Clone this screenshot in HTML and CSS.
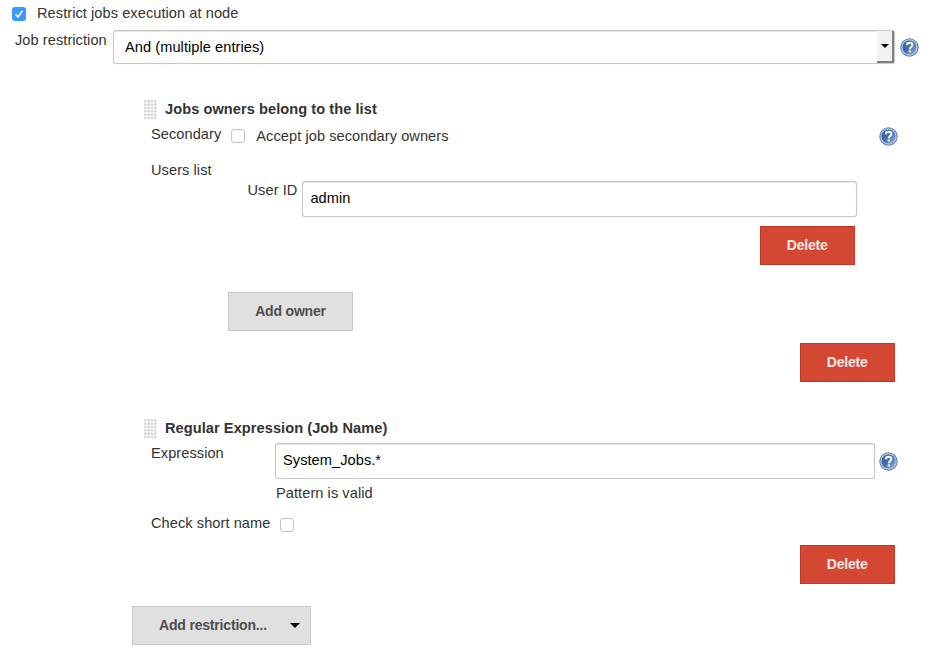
FILE: index.html
```
<!DOCTYPE html>
<html lang="en">
<head>
<meta charset="utf-8">
<title>Job restrictions</title>
<link rel="stylesheet" href="styles.css">
</head>
<body>
<svg class="defs" aria-hidden="true">
  <defs>
    <linearGradient id="ball" x1="0" y1="0" x2="1" y2="1"><stop offset="0" stop-color="#2c5392"/><stop offset=".5" stop-color="#4870b0"/><stop offset="1" stop-color="#9fb9e0"/></linearGradient>
    <symbol id="help" viewBox="0 0 19 19">
      <circle cx="9.5" cy="9.5" r="9.2" fill="#5b7fb6"/>
      <circle cx="9.5" cy="9.5" r="7.6" fill="url(#ball)" stroke="#b9cae4" stroke-width="1.2"/>
      <path d="M6.8 7.2C6.9 5.4 8 4.7 9.6 4.7c1.700 0 2.800.900 2.800 2.300 0 1.900-2.600 2-2.600 4.200" fill="none" stroke="#fff" stroke-width="2"/>
      <rect x="8.700" y="12.400" width="2.200" height="2.100" fill="#fff"/>
    </symbol>
    <pattern id="dots" width="3.333" height="3.333" patternUnits="userSpaceOnUse"><rect x=".3" y=".3" width="2" height="2" fill="#c4c4bc"/></pattern>
    <symbol id="grip" viewBox="0 0 14 20"><rect width="13" height="20" fill="url(#dots)"/></symbol>
  </defs>
</svg>
<main class="form">
  <div class="row row-enable">
    <span class="check checked"><svg viewBox="0 0 14 14"><path d="M3.500 7.300 6 10l4.600-6.400" fill="none" stroke="#fff" stroke-width="1.600"/></svg></span>
    <span class="t enable-label">Restrict jobs execution at node</span>
  </div>
  <div class="row row-select">
    <span class="t select-label">Job restriction</span>
    <div class="select"><span class="t value">And (multiple entries)</span><span class="drop"><i class="caret"></i></span></div>
    <svg class="help"><use href="#help"/></svg>
  </div>

  <section class="owners">
    <div class="row title"><svg class="grip"><use href="#grip"/></svg><b class="t">Jobs owners belong to the list</b></div>
    <div class="row row-secondary">
      <span class="t">Secondary</span><span class="check"></span><span class="t accept">Accept job secondary owners</span>
      <svg class="help"><use href="#help"/></svg>
    </div>
    <div class="row row-users"><span class="t">Users list</span></div>
    <div class="row row-id"><span class="t">User ID</span><div class="input"><span class="t value">admin</span></div></div>
    <div class="row row-del-id"><button class="btn danger">Delete</button></div>
    <div class="row row-add"><button class="btn add-owner">Add owner</button></div>
    <div class="row row-del"><button class="btn danger">Delete</button></div>
  </section>

  <section class="regex">
    <div class="row title"><svg class="grip"><use href="#grip"/></svg><b class="t">Regular Expression (Job Name)</b></div>
    <div class="row row-expr">
      <span class="t expr-label">Expression</span>
      <div class="input"><span class="t value">System_Jobs.*</span></div>
      <svg class="help"><use href="#help"/></svg>
    </div>
    <div class="row row-valid"><span class="t">Pattern is valid</span></div>
    <div class="row row-short"><span class="t">Check short name</span><span class="check"></span></div>
    <div class="row row-del"><button class="btn danger">Delete</button></div>
  </section>

  <button class="btn add-restriction"><span>Add restriction...</span><i class="caret"></i></button>
</main>
</body>
</html>
```
FILE: styles.css
```
* { box-sizing: border-box; }
body {
  margin: 0;
  background: #fff;
  color: #333;
  font: 14.6px/20px "Liberation Sans", Arial, sans-serif;
  letter-spacing: .06px;
}
.defs { position: absolute; width: 0; height: 0; }
.form { width: 926px; height: 649px; overflow: hidden; }
.row { display: flex; align-items: flex-start; }
.t { display: block; white-space: nowrap; flex: none; }

.check {
  flex: none;
  width: 14px;
  height: 14px;
  border: 1px solid #c2c2c2;
  border-radius: 3px;
  background: #fff;
}
.checked { border: 0; background: #3b99fc; }
.checked svg { display: block; width: 14px; height: 14px; }
.help { flex: none; display: block; width: 19px; height: 19px; }
.grip { flex: none; display: block; width: 14px; height: 20px; margin: 1px 7.500px 0 .5px; }
.caret {
  display: block;
  width: 0;
  height: 0;
  border: solid transparent;
  border-width: 5px 5px 0;
  border-top-color: #000;
}

.input, .select {
  flex: none;
  border: 1px solid #c8c8c8;
  border-radius: 3px;
  background: #fff;
  box-shadow: inset 0 1px 1px #e4e4e4, 0 0 1px #ccc;
  color: #000;
}
.input { height: 36px; padding: 6px 7px; }

.row-enable { height: 30px; padding: 3px 0 0 12px; }
.row-enable .check { margin: 4px 11px 0 0; }
.row-select { height: 69px; padding-left: 15px; }
.select-label { width: 97.5px; }
.select { display: flex; justify-content: space-between; width: 782px; height: 34px; padding-left: 11.500px; margin-right: 5px; }
.select .value { padding-top: 6px; }
.drop {
  display: flex;
  align-items: center;
  justify-content: center;
  width: 17px;
  height: 32px;
  background: #f2f2f2;
  border: solid #808080;
  border-width: 0 2px 2px 0;
}
.drop .caret { margin-left: 1px; border-width: 4px 4px 0; }
.row-select .help { margin-top: 8px; }

.title { height: 25px; padding-left: 143px; }
.row-secondary { height: 36px; padding-left: 151px; }
.row-secondary .check { margin: 5px 11px 0 10px; }
.accept { padding-top: 2px; }
.row-secondary .help { margin: 3px 28.5px 0 auto; }
.row-users { height: 20px; padding-left: 151px; }
.row-id { height: 46px; padding-left: 247.5px; }
.row-id .input { width: 555px; margin: 1px 0 0 5px; }
.row-del-id { height: 66px; justify-content: flex-end; padding-right: 71px; }
.row-add { height: 51px; padding-left: 228px; }
.row-del { justify-content: flex-end; padding-right: 31px; }
.owners .row-del { height: 75px; }

.row-expr { height: 40px; padding-left: 151px; }
.expr-label { width: 124px; }
.row-expr .input { width: 600px; margin-right: 4px; }
.row-expr .help { margin-top: 9px; }
.row-valid { height: 30px; padding-left: 276px; }
.row-short { height: 32px; padding-left: 151px; }
.row-short .check { margin: 5px 0 0 10px; }
.regex .row-del { height: 61px; }

.btn {
  display: block;
  height: 39px;
  padding: 0 0 2px;
  border: 1px solid #c8c8c8;
  background: #e0e0e0;
  color: #4d4d4d;
  font: bold 14px/20px "Liberation Sans", Arial, sans-serif;
  letter-spacing: -.18px;
}
.danger { width: 95.5px; border-color: #c4361f; background: #d44733; color: #f4e8e6; }
.add-owner { width: 125px; }
.add-restriction {
  display: flex;
  align-items: center;
  justify-content: space-between;
  width: 179px;
  margin-left: 132px;
  padding: 0 10px 1px 26px;
}
```
